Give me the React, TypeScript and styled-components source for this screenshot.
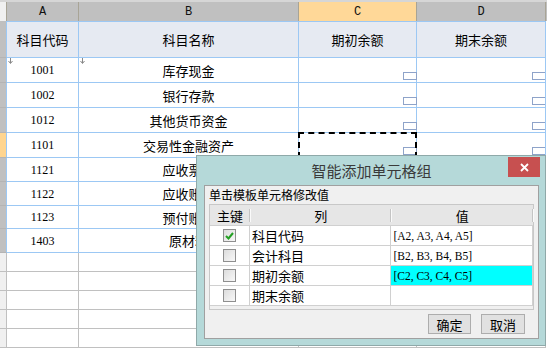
import React from "react";
import styled, { createGlobalStyle } from "styled-components";

const GlobalStyle = createGlobalStyle`
  html, body {
    margin: 0;
    padding: 0;
    background: #fff;
    overflow: hidden;
  }
  body {
    font-family: "Noto Sans CJK SC", "Liberation Sans", sans-serif;
  }
  * { box-sizing: border-box; }
`;

const Sheet = styled.div`
  position: relative;
  width: 547px;
  height: 348px;
  overflow: hidden;
  background: #fff;
`;

const TopStrip = styled.div`
  height: 2px;
  background: #d6d6d6;
`;

const ColHeaderRow = styled.div`
  display: flex;
  height: 19px;
  background: #c0c0c0;
`;

const Corner = styled.div`
  width: 7px;
  background: #f0f0f0;
  border-right: 1px solid #a8a496;
`;

const ColHead = styled.div<{ $w: number; $active?: boolean }>`
  width: ${(p) => p.$w}px;
  border-right: 1px solid #a8a496;
  background: ${(p) => (p.$active ? "#ffd898" : "#c0c0c0")};
  display: flex;
  align-items: center;
  justify-content: center;
  font: 12px "Liberation Mono", monospace;
  color: #111;
`;

const Row = styled.div<{ $h: number }>`
  display: flex;
  height: ${(p) => p.$h}px;
`;

const RowHead = styled.div<{ $tone: "data" | "active" | "empty" }>`
  width: 7px;
  background: ${(p) =>
    p.$tone === "active" ? "#ffd58f" : p.$tone === "data" ? "#c0c0c0" : "#f0f0f0"};
  border-bottom: 1px solid ${(p) => (p.$tone === "empty" ? "#c0c0c0" : "#b4b4b4")};
  border-right: 1px solid ${(p) => (p.$tone === "empty" ? "#c0c0c0" : "#9cc8f4")};
`;

const Cell = styled.div<{ $w: number; $empty?: boolean; $head?: boolean; $top?: boolean }>`
  position: relative;
  width: ${(p) => p.$w}px;
  border-right: 1px solid ${(p) => (p.$empty ? "#c0c0c0" : "#9cc8f4")};
  border-bottom: 1px solid ${(p) => (p.$empty ? "#c0c0c0" : "#9cc8f4")};
  border-top: ${(p) => (p.$top ? "1px solid #9cc8f4" : "none")};
  background: ${(p) => (p.$head ? "#e6eaf2" : "#fff")};
  display: flex;
  align-items: center;
  justify-content: center;
  font-size: 13px;
  color: #000;
  white-space: nowrap;
  overflow: hidden;
`;

const Code = styled.span`
  font: 12px "Liberation Serif", serif;
  padding-top: 1px;
`;

const Marker = styled.div`
  position: absolute;
  right: -1px;
  bottom: 2px;
  width: 14px;
  height: 8px;
  border: 1px solid #8ea3c9;
  background: #fff;
`;

const Selection = styled.div`
  position: absolute;
  inset: -1px -1px -1px -1px;
  border: 2px dashed #000;
`;

const Arrow = styled.svg`
  position: absolute;
  left: 1px;
  top: 0;
`;

/* dialog */

const Dialog = styled.div`
  position: absolute;
  left: 196px;
  top: 155px;
  width: 350px;
  height: 191px;
  background: #b5d9d9;
  border: 1px solid #8fa9a9;
  padding: 0 6px 6px 7px;
  display: flex;
  flex-direction: column;
`;

const TitleBar = styled.div`
  height: 29px;
  display: grid;
  grid-template-columns: 31px 1fr 31px;
`;

const Title = styled.div`
  display: flex;
  align-items: center;
  justify-content: center;
  font-size: 15px;
  color: #3a3a3a;
  padding-bottom: 1px;
`;

const CloseBtn = styled.div`
  margin-top: 1px;
  margin-right: -1px;
  height: 20px;
  background: #c75050;
  display: flex;
  align-items: center;
  justify-content: center;
`;

const Panel = styled.div`
  flex: 1;
  background: #f0f0f0;
  border: 1px solid #a0a0a0;
  padding: 0 4px;
  display: flex;
  flex-direction: column;
`;

const PanelLabel = styled.div`
  height: 18px;
  line-height: 18px;
  font-size: 12px;
  color: #000;
`;

const Table = styled.div`
  height: 106px;
  border: 1px solid #c8c8c8;
  background: #f0f0f0;
  display: flex;
  flex-direction: column;
`;

const THead = styled.div`
  display: flex;
  height: 21px;
  background: #e6e6e6;
  border-bottom: 1px solid #d0d0d0;
`;

const TH = styled.div<{ $w: number }>`
  position: relative;
  width: ${(p) => p.$w}px;
  display: flex;
  align-items: center;
  justify-content: center;
  font-size: 13px;
  color: #000;
  &::after {
    content: "";
    position: absolute;
    right: 0;
    top: 4px;
    bottom: 3px;
    width: 1px;
    background: #c4c4c4;
    box-shadow: 1px 0 0 #fafafa;
  }
`;

const TRow = styled.div`
  display: flex;
  height: 20px;
  background: #fff;
  border-bottom: 1px solid #d0d0d0;
`;

const TD = styled.div<{ $w: number; $center?: boolean; $hl?: boolean; $value?: boolean }>`
  width: ${(p) => p.$w}px;
  border-right: 1px solid #d0d0d0;
  background: ${(p) => (p.$hl ? "#00ffff" : "#fff")};
  display: flex;
  align-items: center;
  justify-content: ${(p) => (p.$center ? "center" : "flex-start")};
  padding-left: ${(p) => (p.$center ? 0 : 2)}px;
  font: ${(p) => (p.$value ? '11.5px "Liberation Serif", serif' : '13px "Noto Sans CJK SC", sans-serif')};
  color: #000;
  white-space: nowrap;
`;

const Box = styled.div`
  width: 13px;
  height: 13px;
  border: 1px solid #8f8f8f;
  background: linear-gradient(135deg, #dcdcdc, #f8f8f8);
  display: flex;
  align-items: center;
  justify-content: center;
`;

const ButtonRow = styled.div`
  display: flex;
  justify-content: flex-end;
  gap: 10px;
  margin-top: 4px;
  padding-right: 9px;
`;

const Button = styled.div<{ $w: number }>`
  width: ${(p) => p.$w}px;
  height: 20px;
  background: #e1e1e1;
  border: 1px solid #adadad;
  display: flex;
  align-items: center;
  justify-content: center;
  font-size: 13px;
  color: #000;
`;

const widths = [72, 220, 118, 129];

const accounts = [
  { code: "1001", name: "库存现金", h: 25 },
  { code: "1002", name: "银行存款", h: 25 },
  { code: "1012", name: "其他货币资金", h: 25 },
  { code: "1101", name: "交易性金融资产", h: 25, selected: true },
  { code: "1121", name: "应收票据", h: 24 },
  { code: "1122", name: "应收账款", h: 24 },
  { code: "1123", name: "预付账款", h: 23 },
  { code: "1403", name: "原材料", h: 24 },
];

const fields = [
  { name: "科目代码", value: "[A2, A3, A4, A5]", checked: true },
  { name: "会计科目", value: "[B2, B3, B4, B5]" },
  { name: "期初余额", value: "[C2, C3, C4, C5]", hl: true },
  { name: "期末余额", value: "" },
];

const DownMark = () => (
  <Arrow width="5" height="6" viewBox="0 0 5 6">
    <path d="M2.5 0 V5 M0.5 3 L2.5 5.5 L4.5 3" stroke="#888" strokeWidth="1" fill="none" />
  </Arrow>
);

const Check = () => (
  <svg width="9" height="8" viewBox="0 0 9 8">
    <path d="M1 4 L3.5 6.5 L8 1" stroke="#24a024" strokeWidth="2" fill="none" />
  </svg>
);

export default function App() {
  return (
    <Sheet>
      <GlobalStyle />
      <TopStrip />
      <ColHeaderRow>
        <Corner />
        {["A", "B", "C", "D"].map((l, i) => (
          <ColHead key={l} $w={widths[i]} $active={l === "C"}>
            {l}
          </ColHead>
        ))}
      </ColHeaderRow>

      <Row $h={37}>
        <RowHead $tone="data" />
        {["科目代码", "科目名称", "期初余额", "期末余额"].map((t, i) => (
          <Cell key={t} $w={widths[i]} $head $top>
            {t}
          </Cell>
        ))}
      </Row>

      {accounts.map((a, r) => (
        <Row key={a.code} $h={a.h}>
          <RowHead $tone={a.selected ? "active" : "data"} />
          <Cell $w={widths[0]}>
            {r === 0 && <DownMark />}
            <Code>{a.code}</Code>
          </Cell>
          <Cell $w={widths[1]}>
            {r === 0 && <DownMark />}
            {a.name}
          </Cell>
          <Cell $w={widths[2]} style={{ overflow: "visible" }}>
            <Marker />
            {a.selected && <Selection />}
          </Cell>
          <Cell $w={widths[3]}>
            <Marker />
          </Cell>
        </Row>
      ))}

      {[0, 1, 2, 3, 4].map((r) => (
        <Row key={r} $h={19}>
          <RowHead $tone="empty" />
          {widths.map((w, i) => (
            <Cell key={i} $w={w} $empty />
          ))}
        </Row>
      ))}

      <Dialog>
        <TitleBar>
          <div />
          <Title>智能添加单元格组</Title>
          <CloseBtn>
            <svg width="9" height="9" viewBox="0 0 9 9">
              <path d="M1 1 L8 8 M8 1 L1 8" stroke="#fff" strokeWidth="1.8" />
            </svg>
          </CloseBtn>
        </TitleBar>
        <Panel>
          <PanelLabel>单击模板单元格修改值</PanelLabel>
          <Table>
            <THead>
              <TH $w={40}>主键</TH>
              <TH $w={142}>列</TH>
              <TH $w={142}>值</TH>
            </THead>
            {fields.map((f) => (
              <TRow key={f.name}>
                <TD $w={40} $center>
                  <Box>{f.checked && <Check />}</Box>
                </TD>
                <TD $w={142}>{f.name}</TD>
                <TD $w={142} $hl={f.hl} $value>
                  {f.value}
                </TD>
              </TRow>
            ))}
          </Table>
          <ButtonRow>
            <Button $w={43}>确定</Button>
            <Button $w={44}>取消</Button>
          </ButtonRow>
        </Panel>
      </Dialog>
    </Sheet>
  );
}
